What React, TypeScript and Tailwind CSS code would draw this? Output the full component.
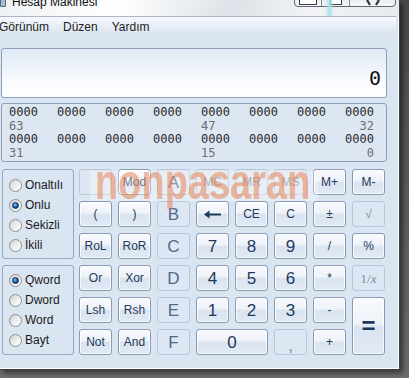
import React from "react";

type Kind = "on" | "off" | "hex";

const ON =
  "border-[#8a9bb3] bg-[linear-gradient(to_bottom,#f8fafd_0%,#eef3f9_46%,#dae4f0_52%,#e0e9f4_100%)] shadow-[inset_0_0_0_1px_rgba(255,255,255,0.75)] text-[#1e395b]";
const OFF = "border-[#b9c7d9] bg-[#dde7f3] text-[#7e8ca0]";
const HEX = "border-[#b9c7d9] bg-[#dde7f3] text-[#53698a]";

function Key({
  children,
  kind = "on",
  className = "",
}: {
  children?: React.ReactNode;
  kind?: Kind;
  className?: string;
}) {
  const look = kind === "on" ? ON : kind === "hex" ? HEX : OFF;
  return (
    <div className={`flex items-center justify-center rounded-[3px] border leading-none ${look} ${className}`}>
      {children}
    </div>
  );
}

function Radio({ label, checked = false }: { label: string; checked?: boolean }) {
  return (
    <div className="flex h-[20px] items-center">
      <span className="flex h-[13px] w-[13px] items-center justify-center rounded-full border border-[#8d8e8f] bg-[linear-gradient(135deg,#d2d2d2,#f2f2f2_60%,#ffffff)]">
        {checked && (
          <span className="h-[7px] w-[7px] rounded-full border border-[#0d2a4d] bg-[radial-gradient(circle_at_40%_35%,#8ccfff_0%,#1f6cc0_45%,#082a55_100%)]" />
        )}
      </span>
      <span className="ml-[3px] text-[12px] text-[#1a1a1a]">{label}</span>
    </div>
  );
}

const sm = "text-[12px]";
const big = "text-[17px]";
const bits = ["0000", "0000", "0000", "0000", "0000", "0000", "0000", "0000"];

function BitRow({ a, b, c }: { a: string; b: string; c: string }) {
  return (
    <>
      <div className="grid grid-cols-[repeat(8,48px)] text-[#2b2b2b]">
        {bits.map((v, i) => (
          <span key={i}>{v}</span>
        ))}
      </div>
      <div className="grid grid-cols-[repeat(8,48px)] text-[#6e6e6e]">
        <span className="col-start-1">{a}</span>
        <span className="col-start-5">{b}</span>
        <span className="col-start-8 w-[29px] text-right">{c}</span>
      </div>
    </>
  );
}

export default function App() {
  return (
    <div className="relative h-[378px] w-[409px] overflow-hidden bg-[linear-gradient(to_bottom,#4a4a4a,#6d6d6d)] font-['Liberation_Sans',Arial,sans-serif]">
      <div className="flex h-[370px] w-[400px] flex-col border-b border-r border-[#3a424c] bg-[#dae5f2] shadow-[inset_-1px_-1px_0_#ffffff,3px_3px_5px_rgba(0,0,0,0.5)]">
        {/* title bar */}
        <div className="relative flex h-[16px] items-start overflow-hidden bg-[linear-gradient(100deg,#eef1f4_0%,#ffffff_30%,#dde2e8_58%,#f2f4f6_78%,#e6e9ed_100%)]">
          <span className="-mt-[3px] h-[10px] w-[6px] rounded-[1px] border border-[#55657a] bg-[#a9bcd3]" />
          <span className="-mt-[6px] ml-[6px] text-[12px] leading-[16px] text-[#111]">Hesap Makinesi</span>
          <div className="ml-auto mr-[3px] flex h-[8px] -mt-px overflow-hidden rounded-b-[4px] border border-[#5d6672] bg-[linear-gradient(to_bottom,#e8ecf0,#f8f9fb)]">
            <div className="flex w-[27px] items-start justify-center border-r border-[#7d8692]">
              <span className="h-[5px] w-[18px] rounded-b-[1px] border border-t-0 border-[#3b3b3b] bg-white" />
            </div>
            <div className="flex w-[28px] items-start justify-center border-r border-[#7d8692]">
              <span className="h-[5px] w-[12px] border border-t-0 border-[#3b3b3b] bg-white" />
            </div>
            <div className="flex w-[45px] items-start justify-center">
              <svg width="14" height="6" viewBox="0 0 14 6">
                <path d="M1 0 L4 5 M13 0 L10 5" stroke="#333" strokeWidth="2.2" fill="none" />
              </svg>
            </div>
          </div>
          <span className="absolute left-[325px] top-0 h-[16px] w-[9px] bg-[linear-gradient(90deg,rgba(170,230,235,0),#a7e3e8_50%,rgba(170,230,235,0))]" />
        </div>

        {/* menu */}
        <div className="-ml-px flex h-[20px] w-[397px] items-center gap-[14px] border-t border-[#a9b6c7] bg-[linear-gradient(to_bottom,#f7f9fc,#e4ebf5_60%,#d9e3f0)] text-[12px] text-[#222]">
          <span>Görünüm</span>
          <span>Düzen</span>
          <span>Yardım</span>
        </div>

        {/* content */}
        <div className="flex flex-col pl-px pt-[12px]">
          <div className="flex h-[50px] w-[386px] flex-col items-end justify-end rounded-[3px] border border-[#8e9fb8] bg-[linear-gradient(to_bottom,#e0e9f5,#f6f9fd_60%,#ffffff)] pb-[9px] pr-[5px]">
            <span className="font-['DejaVu_Sans_Mono',monospace] text-[20px] leading-none text-[#111]">0</span>
          </div>

          <div className="mt-[5px] h-[59px] w-[386px] rounded-[3px] border border-[#8e9fb8] bg-[#dde7f3] pl-[7px] pt-[2px] font-['DejaVu_Sans_Mono',monospace] text-[12px] leading-[13.5px]">
            <BitRow a="63" b="47" c="32" />
            <BitRow a="31" b="15" c="0" />
          </div>

          <div className="mt-[7px] flex">
            <div className="ml-px flex w-[72px] flex-col gap-[6px]">
              <div className="h-[90px] rounded-[3px] border border-[#97a7bd] pl-[6px] pt-[5px]">
                <Radio label="Onaltılı" />
                <Radio label="Onlu" checked />
                <Radio label="Sekizli" />
                <Radio label="İkili" />
              </div>
              <div className="h-[90px] rounded-[3px] border border-[#97a7bd] pl-[6px] pt-[4px]">
                <Radio label="Qword" checked />
                <Radio label="Dword" />
                <Radio label="Word" />
                <Radio label="Bayt" />
              </div>
            </div>

            <div className="ml-[5px] grid grid-cols-[repeat(8,33px)] grid-rows-[repeat(6,26px)] gap-[6px]">
              <Key kind="off" />
              <Key className={sm}>Mod</Key>
              <Key kind="hex" className={big}>A</Key>
              <Key kind="off" className={sm}>MC</Key>
              <Key kind="off" className={sm}>MR</Key>
              <Key kind="off" className={sm}>MS</Key>
              <Key className={sm}>M+</Key>
              <Key className={sm}>M-</Key>

              <Key className={sm}>(</Key>
              <Key className={sm}>)</Key>
              <Key kind="hex" className={big}>B</Key>
              <Key>
                <svg width="18" height="9" viewBox="0 0 18 9">
                  <path d="M4 4.5H17" stroke="#1e395b" strokeWidth="2" />
                  <path d="M0 4.5L5.5 0.5V8.5Z" fill="#1e395b" />
                </svg>
              </Key>
              <Key className={sm}>CE</Key>
              <Key className={sm}>C</Key>
              <Key className={sm}>±</Key>
              <Key kind="off" className={sm}>√</Key>

              <Key className={sm}>RoL</Key>
              <Key className={sm}>RoR</Key>
              <Key kind="hex" className={big}>C</Key>
              <Key className={big}>7</Key>
              <Key className={big}>8</Key>
              <Key className={big}>9</Key>
              <Key className={sm}>/</Key>
              <Key className={sm}>%</Key>

              <Key className={sm}>Or</Key>
              <Key className={sm}>Xor</Key>
              <Key kind="hex" className={big}>D</Key>
              <Key className={big}>4</Key>
              <Key className={big}>5</Key>
              <Key className={big}>6</Key>
              <Key className={sm}>*</Key>
              <Key kind="off" className="font-['Liberation_Serif',serif] text-[13px] text-[#5f7089]">
                1/<i>x</i>
              </Key>

              <Key className={sm}>Lsh</Key>
              <Key className={sm}>Rsh</Key>
              <Key kind="hex" className={big}>E</Key>
              <Key className={big}>1</Key>
              <Key className={big}>2</Key>
              <Key className={big}>3</Key>
              <Key className={sm}>-</Key>
              <Key className="row-span-2 text-[24px] font-bold">=</Key>

              <Key className={sm}>Not</Key>
              <Key className={sm}>And</Key>
              <Key kind="hex" className={big}>F</Key>
              <Key className={`col-span-2 ${big}`}>0</Key>
              <Key kind="off" className={`${big} pt-[6px]`}>,</Key>
              <Key className={sm}>+</Key>
            </div>
          </div>
        </div>
      </div>

      {/* watermark */}
      <div className="absolute left-[90px] top-[171px] h-[30px] w-[228px] bg-white/30" />
      <span className="absolute left-[95px] top-[157px] origin-left scale-x-[0.76] text-[50px] font-bold leading-none text-[rgba(232,115,60,0.48)]">
        nonpasaran
      </span>
    </div>
  );
}
